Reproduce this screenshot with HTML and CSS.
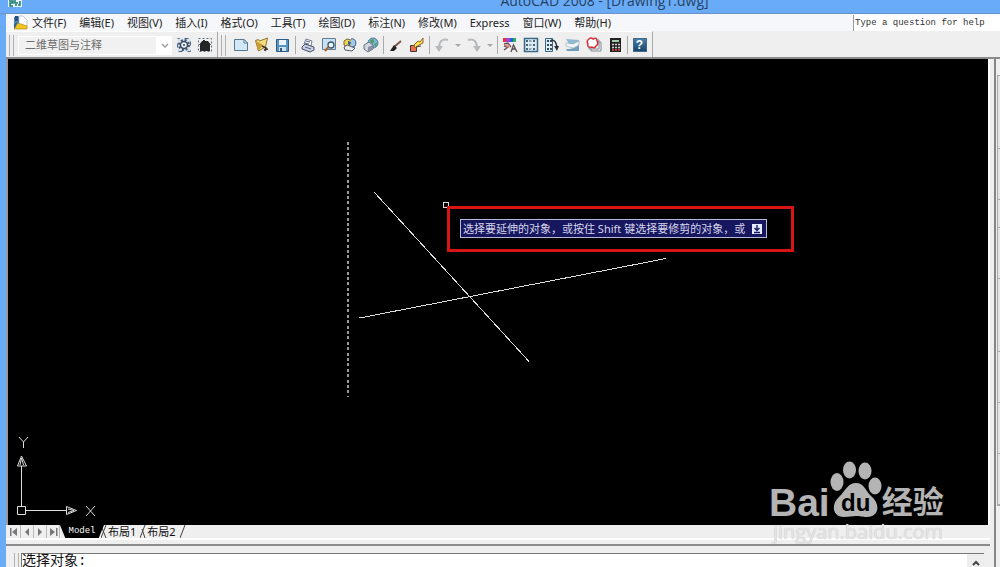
FILE: index.html
```html
<!DOCTYPE html>
<html lang="zh">
<head>
<meta charset="utf-8">
<title>AutoCAD 2008 - [Drawing1.dwg]</title>
<link rel="stylesheet" href="styles.css">
</head>
<body>
<header class="titlebar">
  <svg class="app-icon" width="14" height="8" viewBox="0 0 14 8"><path fill="#e8f6f4" d="M0 0h14v7H0z"/><path fill="none" stroke="#16796f" stroke-width="1.5" d="M1 1h4v2H2v3h3M7 0v3h3M8 6V4M10 5h2V1"/></svg>
  <span class="title">AutoCAD 2008 - [Drawing1.dwg]</span>
</header>
<div class="frame">
  <nav class="menubar">
    <svg class="doc-icon" width="15" height="16" viewBox="0 0 15 16"><path fill="#4f86b8" d="M1 2l4-1 4 3v5H1z"/><path fill="#27527f" d="M2 1l3 0v5H2z"/><path fill="#fff" stroke="#8797a8" stroke-width=".5" d="M6 1h4l4 4v7H6z"/><path fill="#f3c51d" stroke="#a67f10" stroke-width=".6" d="M1 14l4-6 9 3v3z"/><path fill="#31648f" d="M1 9l4-2-3 6H1z"/></svg>
    <button>文件(F)</button><button>编辑(E)</button><button>视图(V)</button><button>插入(I)</button><button>格式(O)</button><button>工具(T)</button><button>绘图(D)</button><button>标注(N)</button><button>修改(M)</button><button>Express</button><button>窗口(W)</button><button>帮助(H)</button>
    <input class="help-box" type="text" aria-label="Help" placeholder="Type a question for help">
  </nav>
  <div class="toolbars">
    <div class="toolbar">
      <i class="grip"></i>
      <span class="combo"><select aria-label="Workspace"><option>二维草图与注释</option></select>
        <svg width="8" height="5" viewBox="0 0 8 5"><path fill="none" stroke="#999" stroke-width="1.4" d="M1 1l3 3 3-3"/></svg></span>
      <button class="tool" aria-label="Workspace settings"><svg viewBox="0 0 16 16"><path fill="#d8e5f0" stroke="#496681" stroke-dasharray="4 5" stroke-dashoffset="2" d="M1.500 1.500h13v13h-13z"/><circle cx="8" cy="8" r="5" fill="none" stroke="#405468" stroke-width="2" stroke-dasharray="2 1.930"/><circle cx="8" cy="8" r="3.500" fill="#e9f0f5" stroke="#34485c" stroke-width="1.500"/><circle cx="8" cy="8" r="1" fill="#34485c"/></svg></button>
      <button class="tool" aria-label="My workspace"><svg viewBox="0 0 16 16"><path fill="none" stroke="#566c80" stroke-dasharray="2 2" d="M1.500 1.500h13v13h-13z"/><path fill="#252525" d="M2 8l3-4h1V3h2v1h3l3 4h-1v6H3V8z"/></svg></button>
    </div>
    <div class="toolbar">
      <i class="grip"></i>
      <button class="tool" aria-label="New"><svg viewBox="0 0 16 16"><path fill="#d2e8f7" stroke="#527996" d="M1.500 2.500h9.500l3.500 3.500v7.500h-13z"/><path fill="#fff" stroke="#527996" d="M11 2.500V6h3.500z"/></svg></button>
      <button class="tool" aria-label="Open"><svg viewBox="0 0 16 16"><path fill="#f5dc7d" stroke="#927332" d="M1.500 3.500l3-1 1 1.500 8-3-2 9-7 4z"/><path fill="#c99b34" d="M2 4l7 4-5 6z"/><path fill="none" stroke="#353525" stroke-width="1.500" d="M8 9l4 2-1 3M10 13l4-1"/></svg></button>
      <button class="tool" aria-label="Save"><svg viewBox="0 0 16 16"><path fill="#5793c2" stroke="#2c5b85" d="M1.500 2.500h12v12h-12z"/><path fill="#eaf4fa" d="M4 3h7v5H4z"/><path fill="#d2e2ed" d="M4 10h7v4H4z"/><path fill="#2c5b85" d="M5 11h2v3H5z"/></svg></button>
      <i class="sep"></i>
      <button class="tool" aria-label="Print"><svg viewBox="0 0 16 16"><path fill="#fff" stroke="#777f94" d="M4 7l2-5 6 2-1 5z"/><path fill="#c6cfe1" stroke="#47536c" d="M2 10l3-3 9 3v3l-4 2-8-3z"/><path stroke="#57617c" d="M5 10l6 2M6 4l4 1M5 6l4 1"/></svg></button>
      <button class="tool" aria-label="Preview"><svg viewBox="0 0 16 16"><path fill="#c9e1f3" stroke="#627f98" d="M1.500 1.500h13v11h-13z"/><circle cx="10" cy="8" r="3" fill="#eef7fc" stroke="#365870" stroke-width="1.300"/><path stroke="#ae652e" stroke-width="2" d="M7.500 10L4 14"/></svg></button>
      <button class="tool" aria-label="Publish"><svg viewBox="0 0 16 16"><path fill="#f1d353" stroke="#79682b" d="M2 4l3-2 7 2v5l-3 2-7-3z"/><path fill="#9ecbed" stroke="#345b83" d="M9 2c4-1 6 3 4 7l-4 2"/><path fill="#edeef3" stroke="#555a68" d="M2 10l3-2 8 3-3 3-7-1z"/><path fill="#365d92" d="M6 4l3 1-1 4-2-2z"/></svg></button>
      <button class="tool" aria-label="3D DWF"><svg viewBox="0 0 16 16"><circle cx="10" cy="6" r="5" fill="#79b5d4" stroke="#557c97"/><path fill="#4c9d57" d="M7 3l3-1 1 3-2 2zM11 7l3-1-1 4z"/><path fill="#d2d6de" stroke="#69717f" d="M1 8l5-3 4 3v4l-5 3-4-3z"/><path fill="#8792a6" d="M5 10l5-2v4l-5 3z"/></svg></button>
      <i class="sep"></i>
      <button class="tool" aria-label="Match properties"><svg viewBox="0 0 16 16"><path stroke="#795743" stroke-width="2" d="M6 10l7-6"/><path fill="#222" d="M2 14l4-6 3 3-3 3z"/></svg></button>
      <button class="tool" aria-label="Block editor"><svg viewBox="0 0 16 16"><path fill="#f26d4e" stroke="#413a36" d="M1.500 8.500h6v6h-6z"/><path fill="#ffdc4f" stroke="#8a682a" d="M5 8l4-4 2 1 3-4 0 5-4 2-4 3z"/><path stroke="#47382c" d="M7 10l5-1"/></svg></button>
      <i class="sep"></i>
      <button class="tool" aria-label="Undo"><svg viewBox="0 0 16 16"><path fill="none" stroke="#b7babd" stroke-width="2" d="M14 3C8 1 5 5 5 11"/><path fill="#b7babd" d="M1 9h8l-4 6z"/></svg></button>
      <button class="drop" aria-label="Undo list"></button>
      <button class="tool" aria-label="Redo"><svg viewBox="0 0 16 16"><path fill="none" stroke="#b7babd" stroke-width="2" d="M2 3c6-2 9 2 9 8"/><path fill="#b7babd" d="M7 9h8l-4 6z"/></svg></button>
      <button class="drop" aria-label="Redo list"></button>
      <i class="sep"></i>
      <button class="tool" aria-label="Properties"><svg viewBox="0 0 16 16"><path fill="#e23540" d="M1 1h3v4H1z"/><path fill="#a342cf" d="M4 1h4v4H4z"/><path fill="#2861e0" d="M8 1h3v4H8z"/><path fill="#28ad5b" d="M11 1h3v4h-3z"/><path fill="none" stroke="#5d5058" stroke-width="1.300" d="M2 7l4-1 3 4M2 9l4 1-4 3M9 15l2.500-7L15 15M10 12h4"/><path fill="#d59080" d="M3 7l5 1-1 3-4-2z"/></svg></button>
      <button class="tool" aria-label="DesignCenter"><svg viewBox="0 0 16 16"><path fill="#ddecf5" stroke="#396885" stroke-width="1.500" d="M1.500 1.500h13v13h-13z"/><path stroke="#4b6072" stroke-width="2" stroke-dasharray="2 1.500" d="M3 4h10M3 8h10M3 12h10"/><path stroke="#ddecf5" d="M8 2v12"/></svg></button>
      <button class="tool" aria-label="Tool palettes"><svg viewBox="0 0 16 16"><path fill="#ddecf5" stroke="#396885" d="M1.500 1.500h7v13h-7z"/><path stroke="#394e61" stroke-width="2" stroke-dasharray="2 1" d="M3 4h5M3 8h5M3 12h5"/><path fill="none" stroke="#28313b" stroke-width="1.500" d="M7 3c4 0 5 2 6 7"/><path fill="#28313b" d="M10 9h5l-2 5z"/></svg></button>
      <button class="tool" aria-label="Sheet set"><svg viewBox="0 0 16 16"><path fill="#8fb9d0" d="M1 2l13 1v5L4 7z"/><path fill="#f4f7f9" stroke="#8da4b4" stroke-width=".6" d="M1 6l7 1 6-3v4l-6 3-7-2z"/><path fill="#709eb8" d="M1 12c4 0 8 0 13-4v6H2z"/></svg></button>
      <button class="tool" aria-label="Markup"><svg viewBox="0 0 16 16"><path fill="#edf0f4" stroke="#858b96" d="M5 5h10v9H5zM3 3h10v9H3z"/><path fill="#fff" stroke="#d82e39" stroke-width="1.500" d="M3 2q2-2 4 0 4-2 4 2 2 3-1 5-2 3-4 1-5 1-4-3-2-3 1-5z"/></svg></button>
      <button class="tool" aria-label="Calculator"><svg viewBox="0 0 16 16"><path fill="#222" d="M3 1h11v14H3z"/><path fill="#a5cbb1" d="M5 3h7v2H5z"/><path stroke="#d3d3d3" stroke-width="1.500" stroke-dasharray="2 1" d="M5 7.500h8M5 10.500h8"/><path stroke="#da4a45" stroke-width="1.500" stroke-dasharray="2 1" d="M5 13h8"/></svg></button>
      <i class="sep"></i>
      <button class="tool help" aria-label="Help"><b>?</b></button>
    </div>
  </div>
  <div class="workspace">
    <main class="document">
      <section class="drawing">
        <svg class="geometry" width="980" height="466" viewBox="8 59 980 466" fill="none" stroke="#ddd" shape-rendering="crispEdges">
          <path stroke-width="2" stroke="#999" stroke-dasharray="3 2.400" d="M348 142V397"/>
          <path d="M374.500 192.500L529 361.500M359.500 318L666 258.500"/>
          <path d="M443.500 202.500h5v5h-5z"/>
        </svg>
        <svg class="ucs" width="90" height="84" viewBox="12 433 90 84" fill="none" stroke="#dedede">
          <path d="M17.500 506.500h8v8h-8zM21.500 506V466M26 510.500h41M17.500 466l4-10 5 10zM20 465l1.500-7 2 7M66.500 506.500v8l10-4zM68 509l6 1.500-6 2M19 437l4.500 5 4.500-5M23.500 442v6M86 506l9 10M95 506l-9 10"/>
        </svg>
        <div class="callout">
          <div class="prompt"><span>选择要延伸的对象，或按住 Shift 键选择要修剪的对象，或</span><svg width="10" height="10" viewBox="0 0 10 10"><path fill="#e5eaff" d="M0 0h10v10H0z"/><path fill="none" stroke="#17175f" stroke-width="1.400" d="M5 1v5M2.500 4L5 6.500 7.500 4M2 8.500h6"/></svg></div>
        </div>
      </section>
      <div class="tabs">
        <button class="nav" aria-label="First"><svg viewBox="0 0 12 12"><path d="M2 2h1.500v8H2zM9 2v8L4 6z"/></svg></button>
        <button class="nav" aria-label="Previous"><svg viewBox="0 0 12 12"><path d="M8 2v8L4 6z"/></svg></button>
        <button class="nav" aria-label="Next"><svg viewBox="0 0 12 12"><path d="M4 2v8l4-4z"/></svg></button>
        <button class="nav" aria-label="Last"><svg viewBox="0 0 12 12"><path d="M3 2v8l5-4zM9 2h1.500v8H9z"/></svg></button>
        <button class="tab active">Model</button>
        <svg class="slash" viewBox="0 0 6 13"><path d="M0 13L5 0M1 3l4 10"/></svg>
        <button class="tab">布局1</button>
        <svg class="slash" viewBox="0 0 6 13"><path d="M0 13L5 0M2 4l3 9"/></svg>
        <button class="tab">布局2</button>
        <svg class="slash" viewBox="0 0 6 13"><path d="M0 13L5 0"/></svg>
      </div>
      <section class="command">
        <i class="grip"></i>
        <div class="history"><span>选择对象:</span>
          <button class="scroll" aria-label="Scroll up"><svg width="8" height="6" viewBox="0 0 8 6"><path fill="none" stroke="#444" stroke-width="2" d="M1 5l3-3 3 3"/></svg></button></div>
      </section>
      <div class="watermark">
        <div class="brand"><span class="bai">Bai</span>
          <span class="paw"><svg width="52" height="57" viewBox="0 0 52 57"><g fill="#b4b4b4"><ellipse cx="7" cy="21" rx="6.500" ry="9"/><ellipse cx="19.500" cy="9" rx="6.500" ry="8.500"/><ellipse cx="35" cy="10" rx="6.500" ry="8.500"/><ellipse cx="45" cy="25" rx="6.500" ry="8.500"/><path d="M26 22c8 0 9 7 15 13 10 8 8 21-4 21-5 0-7-1-11-1s-7 1-12 1C2 56 1 43 9 36c7-7 9-14 17-14z"/></g></svg><b>du</b></span>
          <span class="jy">经验</span></div>
        <div class="site">jingyan.baidu.com</div>
      </div>
    </main>
    <aside class="dock"><div class="palette"><i></i><i class="s"></i><i class="t"></i><i class="s"></i><i></i><i class="s"></i><i class="s"></i><i class="s"></i></div></aside>
  </div>
</div>
</body>
</html>
```
FILE: styles.css
```css
* { box-sizing: border-box; }
body {
  margin: 0;
  height: 100vh;
  overflow: hidden;
  display: flex;
  flex-direction: column;
  background: #6aabf8;
  font: 11px/16px "Noto Sans", "Noto Sans CJK SC", sans-serif;
  color: #222;
}
button { border: 0; padding: 0; background: none; font: inherit; color: inherit; }
.titlebar {
  flex: none;
  height: 14px;
  display: flex;
  align-items: flex-start;
  border-bottom: 1px solid #6c92c4;
}
.app-icon { margin-left: 8px; }
.title {
  flex: 1;
  margin: -7px 0 0 187px;
  text-align: center;
  font: 14px/16px "Open Sans", sans-serif;
  color: #26415f;
}
.frame {
  flex: 1;
  min-height: 0;
  margin-left: 6px;
  display: flex;
  flex-direction: column;
  background: #efefef;
}
.menubar {
  height: 17px;
  display: flex;
  align-items: center;
  gap: 13px;
  padding-left: 7px;
  background: #f5f7fa;
}
.menubar button { white-space: nowrap; }
.doc-icon { margin-right: -9px; }
.help-box {
  width: 147px;
  height: 16px;
  margin-left: auto;
  padding: 0 1px;
  border: 0;
  border-left: 1px solid #999;
  background: #fff;
  font: 9px "Liberation Mono", monospace;
}
.help-box::placeholder { color: #333; opacity: 1; }
.toolbars { height: 28px; display: flex; border-bottom: 2px solid #8a8a8a; }
.toolbar {
  display: flex;
  align-items: center;
  padding: 1px 2px 0 3px;
  border-right: 1px solid #aaa;
  border-top: 1px solid #fff;
}
.grip {
  flex: none;
  width: 5px;
  height: 21px;
  margin-right: 4px;
  border: solid #b0b0b0;
  border-width: 0 1px;
}
.combo {
  width: 154px;
  height: 19px;
  margin-right: 1px;
  padding-right: 2px;
  display: flex;
  align-items: center;
  background: linear-gradient(to right, #f1f1f1 137px, #fff 137px);
  border: 1px solid #fff;
}
.combo select {
  flex: 1;
  appearance: none;
  border: 0;
  padding: 0 6px;
  background: none;
  font: inherit;
  color: #6d6d6d;
}
.tool { width: 21px; height: 22px; display: grid; place-items: center; }
.tool svg { width: 16px; height: 16px; fill: none; }
.drop { width: 11px; height: 20px; display: grid; place-items: center; }
.drop::before { content: ""; border: 3px solid transparent; border-top-color: #aaa; border-bottom: 0; }
.sep { width: 1px; height: 18px; margin: 0 1px 0 2px; background: #aaa; }
.help b {
  width: 14px;
  height: 14px;
  background: linear-gradient(#487fa9, #17466e);
  border: 1px solid #43698a;
  color: #fff;
  font: bold 12px/12px "Liberation Sans", sans-serif;
}
.workspace { flex: 1; min-height: 0; display: flex; }
.document {
  position: relative;
  flex: 1;
  min-width: 0;
  display: flex;
  flex-direction: column;
}
.drawing {
  position: relative;
  flex: 1;
  min-height: 0;
  margin-right: 4px;
  border-left: 2px solid #999;
  border-right: 2px solid #fff;
  background: #000;
  overflow: hidden;
}
.geometry { position: absolute; left: 0; top: 0; }
.ucs { position: absolute; left: 4px; bottom: 8px; }
.callout {
  position: absolute;
  left: 439px;
  top: 147px;
  padding: 10px 24px 11px 10px;
  border: 3px solid #d81414;
}
.prompt {
  height: 19px;
  display: flex;
  align-items: center;
  gap: 7px;
  padding: 0 4px 0 2px;
  border: 1px solid #b9b9dc;
  background: #17175f;
  color: #d6d6ec;
  white-space: nowrap;
}
.tabs {
  height: 15px;
  margin-right: 4px;
  display: flex;
  padding-left: 2px;
  border-bottom: 2px solid #fff;
  line-height: 13px;
}
.nav { width: 13px; border-right: 1px solid #bbb; }
.nav svg { display: block; width: 12px; height: 12px; fill: #777; }
.tab { padding: 0 4px 0 1px; color: #111; }
.tab.active {
  width: 44px;
  margin-right: -3px;
  padding: 0;
  background: #000;
  color: #fff;
  font: 9px/13px "Liberation Mono", monospace;
  clip-path: polygon(0 0, 100% 0, 88% 100%, 12% 100%);
}
.slash { width: 6px; height: 13px; fill: none; stroke: #444; }
.command {
  flex: none;
  height: 23px;
  margin: 4px 4px 0 0;
  padding-top: 7px;
  display: flex;
  border-top: 2px solid #8c8c8c;
}
.command .grip { margin: 0 0 0 8px; }
.history {
  flex: 1;
  height: 18px;
  margin: 0 6px 0 2px;
  display: flex;
  justify-content: space-between;
  border: solid #777;
  border-width: 1px 0 0 1px;
  background: #fff;
  font: 14px/15px "Liberation Mono", "Noto Sans CJK SC", monospace;
  color: #111;
}
.scroll { width: 17px; background: #eee; display: grid; place-items: center; }
.dock { width: 6px; border-left: 2px solid #858585; padding: 16px 0 0 1px; }
.palette { border: 1px solid #aaa; border-right: 0; background: #e5e5e5; }
.palette i { display: block; height: 73px; border-bottom: 1px solid #aaa; }
.palette .s { height: 51px; }
.palette .t { height: 28px; }
.watermark { position: absolute; right: 47px; bottom: 23px; width: 178px; }
.brand { display: flex; align-items: flex-end; color: #b4b4b4; }
.bai { font: bold 39px/34px "Liberation Sans", sans-serif; }
.paw { position: relative; margin-bottom: 2px; }
.paw svg { display: block; }
.paw b {
  position: absolute;
  inset: auto 0 3px 0;
  text-align: center;
  color: #000;
  font: bold 24px/24px "Liberation Sans", sans-serif;
}
.jy {
  margin-bottom: 4px;
  font: bold 31px/32px "Noto Sans CJK SC", sans-serif;
  white-space: nowrap;
}
.site {
  text-align: center;
  color: #e4e4e4;
  text-shadow: 0 0 1px #bbb;
  font: 20px/24px "Open Sans", sans-serif;
}
```
